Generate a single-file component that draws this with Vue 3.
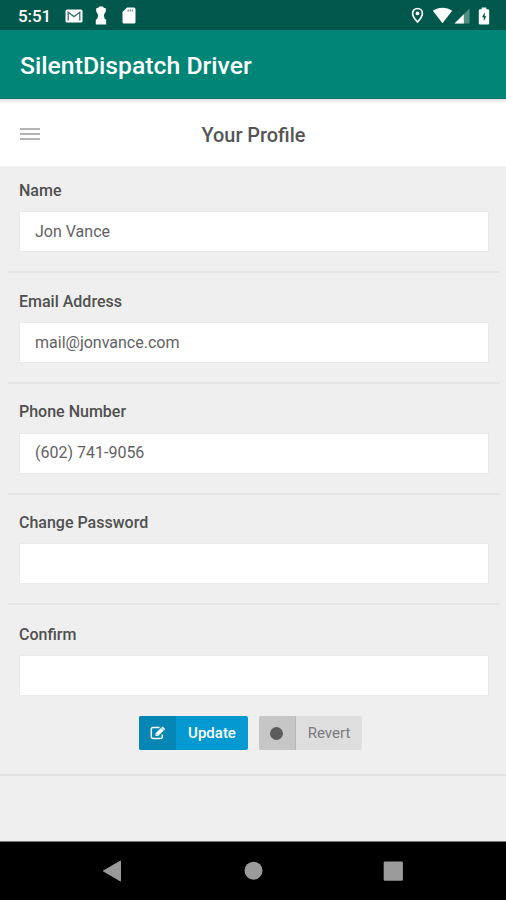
<script setup>
import { reactive } from 'vue'

const fields = reactive([
  { id: 'name', label: 'Name', type: 'text', value: 'Jon Vance' },
  { id: 'email', label: 'Email Address', type: 'text', value: 'mail@jonvance.com' },
  { id: 'phone', label: 'Phone Number', type: 'text', value: '(602) 741-9056' },
  { id: 'password', label: 'Change Password', type: 'password', value: '' },
  { id: 'confirm', label: 'Confirm', type: 'password', value: '' },
])
</script>

<template>
  <div class="screen">
    <header class="status">
      <span class="clock">5:51</span>
      <svg class="mail" width="18" height="14" viewBox="0 0 18 14">
        <rect x="0.5" y="0.5" width="17" height="13" rx="1.5" fill="#fff" />
        <path d="M3.200 11.500V3.200L9 7.600l5.800-4.400v8.300" fill="none" stroke="#3c7068" stroke-width="1.300" />
      </svg>
      <svg class="keyhole" width="12" height="19" viewBox="0 0 12 19">
        <path d="M4 .5h4l.7 1.200 2.100.6v3.200L8.900 8.700l.6 3.800 1.700 1.200v4.800H.8v-4.800l1.700-1.200.6-3.800L1.200 5.500V2.300l2.100-.6z" fill="#fff" />
      </svg>
      <svg class="card" width="14" height="17" viewBox="0 0 14 17">
        <path d="M5 .5h7A1.500 1.500 0 0 1 13.500 2v13a1.500 1.500 0 0 1-1.500 1.500H2A1.500 1.500 0 0 1 .5 15V5z" fill="#fff" />
        <path d="M6.200 2.400v2M8.300 2.400v2M10.400 2.400v2" stroke="#5c8580" stroke-width="1.200" />
      </svg>
      <span class="grow"></span>
      <svg class="pin" width="13" height="17" viewBox="0 0 13 17">
        <path d="M6.500 1.500a4.900 4.900 0 0 1 4.900 4.900c0 3.200-4.900 8.600-4.900 8.600S1.600 9.600 1.600 6.400a4.900 4.900 0 0 1 4.900-4.900z" fill="none" stroke="#fff" stroke-width="1.700" />
        <circle cx="6.500" cy="6.400" r="1.900" fill="#fff" />
      </svg>
      <svg class="wifi" width="21" height="17" viewBox="0 0 21 17">
        <path d="M.8 3.800C6.500-.2 14.500-.2 20.200 3.800L10.500 16.300z" fill="#fff" />
      </svg>
      <svg class="signal" width="16" height="16" viewBox="0 0 16 16">
        <path d="M15.500.5v15H.5z" fill="#508f84" />
        <path d="M9.800 6.200v9.300H.5z" fill="#fff" />
      </svg>
      <svg class="battery" width="12" height="18" viewBox="0 0 12 18">
        <path d="M3.700.5h4.600v1.700h1.700a1.200 1.200 0 0 1 1.200 1.200v12.900a1.200 1.200 0 0 1-1.200 1.200H2a1.200 1.200 0 0 1-1.200-1.200V3.400A1.200 1.200 0 0 1 2 2.200h1.700z" fill="#fff" />
        <path d="M6.700 5.200L4 10.200h1.800v4L8.300 9.200H6.700z" fill="#00574b" />
      </svg>
    </header>

    <div class="appbar"><h1>SilentDispatch Driver</h1></div>

    <nav class="titlebar">
      <button class="menu" aria-label="Menu"><i></i><i></i><i></i></button>
      <h2>Your Profile</h2>
    </nav>

    <main class="form">
      <section v-for="f in fields" :key="f.id" class="field">
        <label :for="f.id">{{ f.label }}</label>
        <input :id="f.id" v-model="f.value" :type="f.type" />
      </section>
      <div class="actions">
        <button class="btn update">
          <span class="ico">
            <svg width="16" height="14" viewBox="0 0 16 14">
              <path d="M9.500 1.500H3A1.700 1.700 0 0 0 1.300 3.200v7.600A1.700 1.700 0 0 0 3 12.500h7.600a1.700 1.700 0 0 0 1.700-1.700V8.500" fill="none" stroke="#fff" stroke-width="1.500" />
              <path d="M5.500 10V7.300L12.600.6l2.600 2.500L8.200 10z" fill="#fff" />
              <path d="M11.300 1.800l2.600 2.600M6.300 7.800l1.500 1.500" stroke="#0686b5" stroke-width=".7" />
            </svg>
          </span>
          <span class="txt">Update</span>
        </button>
        <button class="btn revert">
          <span class="ico"><i class="dot"></i></span>
          <span class="txt">Revert</span>
        </button>
      </div>
    </main>

    <footer class="navbar">
      <svg width="20" height="22" viewBox="0 0 20 22"><path d="M1.300 11L18.500 1v20z" fill="#999" stroke="#999" stroke-linejoin="round" /></svg>
      <svg width="20" height="22" viewBox="0 0 20 22"><circle cx="10.500" cy="10.700" r="9" fill="#9b9b9b" /></svg>
      <svg width="20" height="22" viewBox="0 0 20 22"><rect x=".7" y="1.500" width="19.200" height="19.200" rx="1.300" fill="#9b9b9b" /></svg>
    </footer>
  </div>
</template>

<style>
body { margin: 0; background: #efefef; }
</style>

<style scoped>
* { box-sizing: border-box; }
.screen {
  width: 506px;
  height: 900px;
  overflow: hidden;
  display: flex;
  flex-direction: column;
  background: #efefef;
  font-family: Roboto, "Liberation Sans", sans-serif;
}
button { border: 0; padding: 0; background: none; font-family: inherit; }
svg { display: block; flex: none; }
.status {
  flex: none;
  height: 30px;
  padding: 1px 16px 0 18px;
  display: flex;
  align-items: center;
  background: #00574b;
}
.clock { width: 47px; color: #fff; font-size: 17px; font-weight: 500; line-height: 20px; letter-spacing: -0.1px; }
.keyhole { margin-left: 12px; }
.card { margin-left: 15px; }
.grow { flex: 1; }
.wifi { margin-left: 8px; }
.signal { margin-left: 1px; margin-top: 1px; }
.battery { margin-left: 8px; }
.appbar {
  flex: none;
  height: 69px;
  padding: 4px 20px 0;
  display: flex;
  align-items: center;
  background: #008577;
  border-bottom: 1px solid #087064;
}
h1 { margin: 0; color: #fff; font-size: 24.75px; font-weight: 500; line-height: 32px; white-space: nowrap; }
.titlebar {
  flex: none;
  height: 67px;
  padding: 5px 20px 0;
  display: grid;
  grid-template-columns: 20px 1fr 20px;
  align-items: center;
  background: linear-gradient(#dfe4e4, #fff 5px);
}
.menu { display: flex; flex-direction: column; gap: 3px; padding-bottom: 2px; }
.menu i { width: 20px; height: 2px; background: #b4b4b4; }
h2 { margin: 0; padding: 1px 0 0 1px; text-align: center; color: #555; font-size: 19.9px; font-weight: 500; line-height: 24px; }
.form { flex: 1; background: #efefef; border-top: 1px solid #f3f3f3; }
.field {
  height: 110.67px;
  margin: 0 6px 0 8px;
  padding: 0 11px 19px 11px;
  display: flex;
  flex-direction: column;
  justify-content: flex-end;
  border-bottom: 2px solid #e5e5e5;
}
.field:first-child { height: 106.4px; }
.field:nth-child(5) { height: 90.5px; padding-bottom: 0; border-bottom: 0; }
label { margin-bottom: 10.3px; color: #505050; font-size: 16px; font-weight: 500; line-height: 20px; }
input {
  width: 100%;
  height: 41px;
  padding: 0 15px 1px;
  border: 1px solid #e9e9e9;
  background: #fff;
  color: #626262;
  font: 400 16px Roboto, "Liberation Sans", sans-serif;
  outline: none;
}
.actions {
  height: 79.67px;
  padding: 19.7px 5px 0 0;
  display: flex;
  justify-content: center;
  gap: 11px;
  border-bottom: 2px solid #e2e2e2;
}
.btn { height: 34px; display: flex; border-radius: 2px; overflow: hidden; font-size: 15px; line-height: 34px; }
.ico { width: 37px; height: 34px; display: flex; align-items: center; justify-content: center; }
.txt { flex: 1; text-align: center; }
.update { width: 109px; background: #0499d0; color: #fff; font-weight: 500; }
.update .ico { background: #0686b5; }
.revert { width: 103px; background: #dedede; color: #7b7b7b; }
.revert .ico { padding-right: 2px; background: #c6c6c6; border-right: 1px solid #b8b8b8; }
.dot { width: 13px; height: 13px; margin-top: 2px; border-radius: 50%; background: #5c5c5c; }
.navbar {
  flex: none;
  height: 59px;
  padding: 0 103px 0 102px;
  display: flex;
  align-items: center;
  justify-content: space-between;
  background: #000;
  border-top: 1px solid #777;
}
</style>
